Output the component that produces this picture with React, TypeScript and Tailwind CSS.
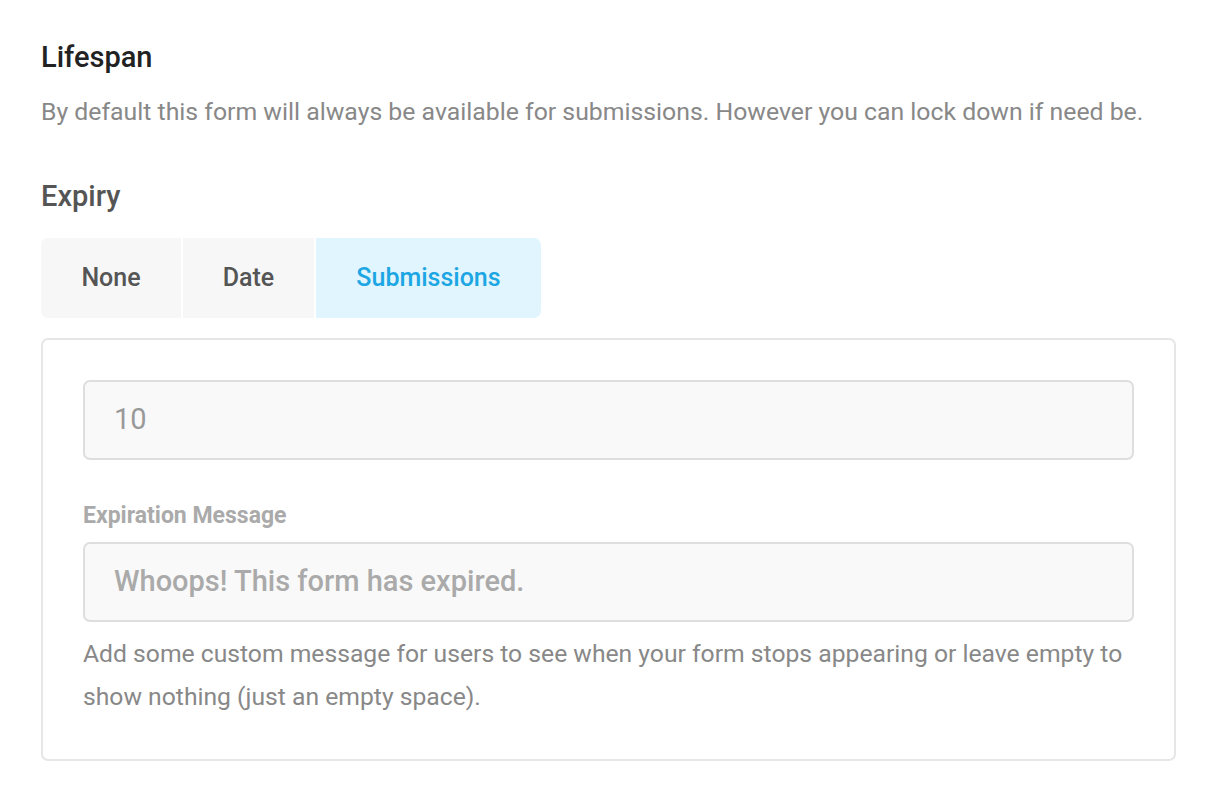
import React, { useState } from "react";

const tabs = ["None", "Date", "Submissions"];

export default function App() {
  const [active, setActive] = useState("Submissions");

  return (
    <div className="min-h-screen bg-white pl-[41px] pr-[44px] pt-[39px] font-['Roboto',sans-serif]">
      <h2 className="text-[29px] leading-[36px] font-medium text-[#222]">Lifespan</h2>
      <p className="mt-[19px] text-[24.8px] leading-[36px] text-[#888]">
        By default this form will always be available for submissions. However you can lock down if need be.
      </p>

      <h3 className="mt-[46px] text-[29px] leading-[40px] font-medium text-[#555]">Expiry</h3>

      <div className="mt-[22px] flex gap-[2px]">
        {tabs.map((t, i) => {
          const on = t === active;
          return (
            <button
              key={t}
              onClick={() => setActive(t)}
              className={`h-[80px] text-[25px] font-medium ${
                on ? "bg-[#e1f5fe] text-[#1ca6e3]" : "bg-[#f7f7f7] text-[#555]"
              } ${i === 0 ? "w-[140px] rounded-l-[7px]" : ""} ${i === 1 ? "w-[131px]" : ""} ${
                i === 2 ? "w-[225px] rounded-r-[7px]" : ""
              }`}
            >
              {t}
            </button>
          );
        })}
      </div>

      <div className="mt-[20px] rounded-[7px] border-2 border-[#e6e6e6] px-[40px] pt-[40px] pb-[41px]">
        <div className="flex h-[80px] items-center rounded-[7px] border-2 border-[#dedede] bg-[#f9f9f9] px-[29px] text-[29px] text-[#999]">
          10
        </div>

        <div className="mt-[42px] text-[23px] leading-[28px] font-bold text-[#aaa]">Expiration Message</div>
        <div className="mt-[12px] flex h-[80px] items-center rounded-[7px] border-2 border-[#dedede] bg-[#f9f9f9] px-[29px] text-[29px] font-medium text-[#aaa]">
          Whoops! This form has expired.
        </div>

        <p className="mt-[10px] text-[24.7px] leading-[43px] text-[#888]">
          Add some custom message for users to see when your form stops appearing or leave empty to show nothing (just an empty space).
        </p>
      </div>
    </div>
  );
}
